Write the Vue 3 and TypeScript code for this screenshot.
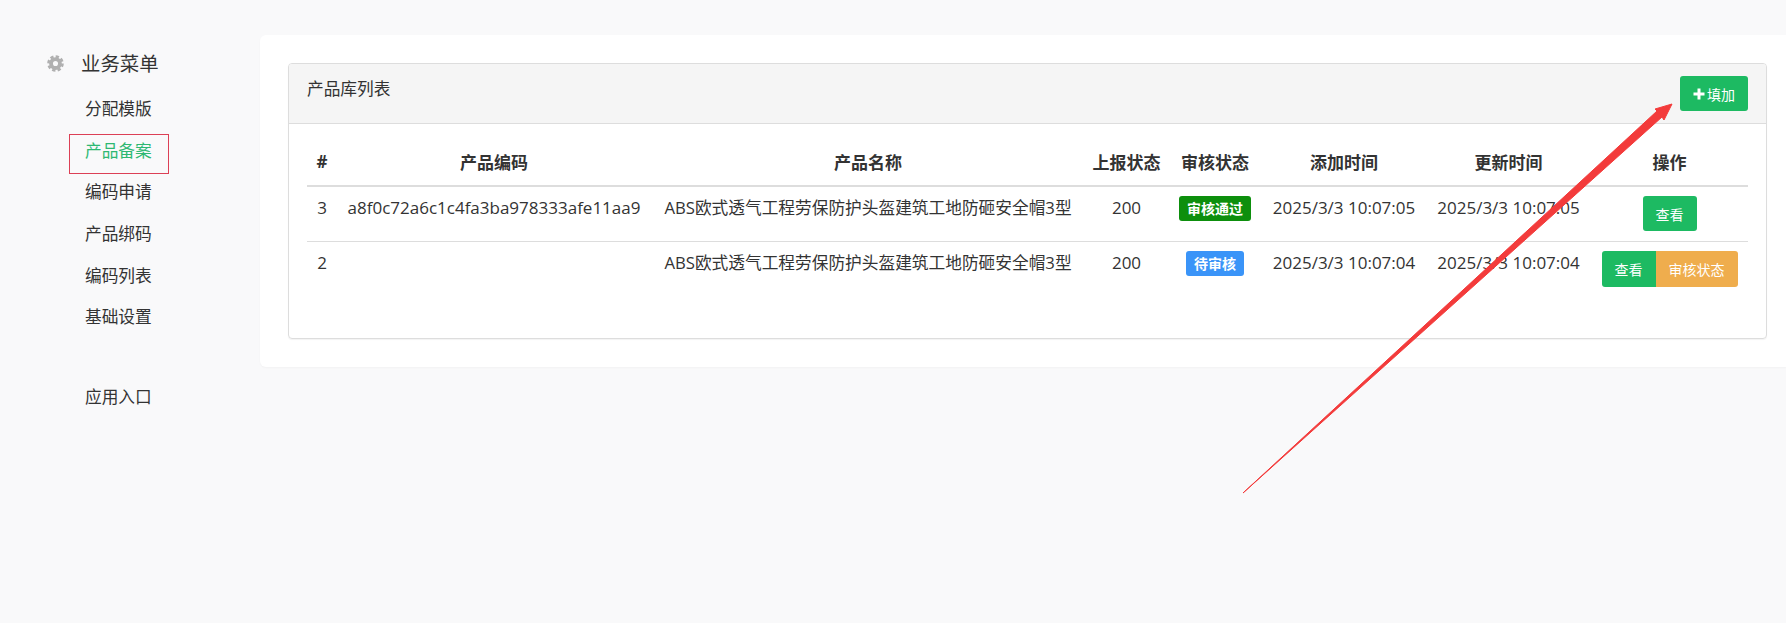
<script setup lang="ts">
interface Row {
  id: number
  code: string
  name: string
  report: number
  status: string
  statusClass: string
  added: string
  updated: string
  audit: boolean
}

const menu = [
  { label: '分配模版', active: false },
  { label: '产品备案', active: true },
  { label: '编码申请', active: false },
  { label: '产品绑码', active: false },
  { label: '编码列表', active: false },
  { label: '基础设置', active: false },
]

const name = 'ABS欧式透气工程劳保防护头盔建筑工地防砸安全帽3型'

const rows: Row[] = [
  { id: 3, code: 'a8f0c72a6c1c4fa3ba978333afe11aa9', name, report: 200, status: '审核通过', statusClass: 'passed', added: '2025/3/3 10:07:05', updated: '2025/3/3 10:07:05', audit: false },
  { id: 2, code: '', name, report: 200, status: '待审核', statusClass: 'pending', added: '2025/3/3 10:07:04', updated: '2025/3/3 10:07:04', audit: true },
]

const columns = ['#', '产品编码', '产品名称', '上报状态', '审核状态', '添加时间', '更新时间', '操作']
</script>

<template>
  <div class="page">
    <aside class="sidebar">
      <div class="menu-title">
        <svg class="gear" viewBox="0 0 16 16" width="17" height="17" aria-hidden="true">
          <circle cx="8" cy="8" r="4.2" fill="none" stroke="#b0b0b0" stroke-width="3.6" />
          <circle cx="8" cy="8" r="6.6" fill="none" stroke="#b0b0b0" stroke-width="2.4" stroke-dasharray="3.1 2.08" />
        </svg>
        <span>业务菜单</span>
      </div>
      <ul class="menu">
        <li v-for="item in menu" :key="item.label" :class="{ active: item.active }">{{ item.label }}</li>
      </ul>
      <div class="entry">应用入口</div>
    </aside>

    <main class="main">
      <section class="card">
        <div class="panel">
          <header class="panel-head">
            <span class="panel-title">产品库列表</span>
            <button class="btn add" type="button">
              <svg viewBox="0 0 12 12" width="12" height="12" aria-hidden="true">
                <path d="M4.5 0.5h3v4h4v3h-4v4h-3v-4h-4v-3h4z" fill="#fff" />
              </svg>
              填加
            </button>
          </header>
          <div class="panel-body">
            <table class="table">
              <thead>
                <tr>
                  <th v-for="col in columns" :key="col">{{ col }}</th>
                </tr>
              </thead>
              <tbody>
                <tr v-for="row in rows" :key="row.id">
                  <td>{{ row.id }}</td>
                  <td>{{ row.code }}</td>
                  <td class="name">{{ row.name }}</td>
                  <td>{{ row.report }}</td>
                  <td><span class="tag" :class="row.statusClass">{{ row.status }}</span></td>
                  <td>{{ row.added }}</td>
                  <td>{{ row.updated }}</td>
                  <td>
                    <div class="actions">
                      <button class="btn view" type="button">查看</button>
                      <button v-if="row.audit" class="btn audit" type="button">审核状态</button>
                    </div>
                  </td>
                </tr>
              </tbody>
            </table>
          </div>
        </div>
      </section>
    </main>

    <svg class="arrow" width="1786" height="623" viewBox="0 0 1786 623" aria-hidden="true">
      <polygon points="1672,104 1655,109 1657,111 1243,493 1662,117 1664,120" fill="#f33b3b" stroke="#f33b3b" stroke-width="1" stroke-linejoin="round" />
    </svg>
  </div>
</template>

<style>
html,
body {
  margin: 0;
  background: #f9f9fa;
}
</style>

<style scoped>
.page {
  position: relative;
  display: flex;
  width: 1786px;
  height: 623px;
  overflow: hidden;
  background: #f9f9fa;
  color: #333;
  font-family: "Open Sans", "Noto Sans CJK SC", sans-serif;
  font-size: 16px;
}

.sidebar {
  flex: 0 0 260px;
  box-sizing: border-box;
  padding-top: 41px;
}

.menu-title {
  display: flex;
  align-items: center;
  height: 42px;
  padding-left: 47px;
  font-size: 19.4px;
}

.gear {
  margin-right: 17px;
  transform: translateY(1px);
}

.menu {
  margin: 5px 0 0;
  padding: 0;
  list-style: none;
}

.menu li,
.entry {
  height: 41.7px;
  line-height: 41.7px;
  padding-left: 85px;
  font-size: 16.7px;
}

.menu li.active {
  position: relative;
  color: #2eb872;
}

.menu li.active::after {
  content: "";
  position: absolute;
  left: 69px;
  top: 4px;
  width: 98px;
  height: 38px;
  border: 1px solid #dc4055;
}

.entry {
  margin-top: 38px;
}

.main {
  flex: 1;
  min-width: 0;
  padding-top: 35px;
}

.card {
  box-sizing: border-box;
  height: 332px;
  padding: 28px 19px 0 28px;
  background: #fff;
  border-radius: 6px 0 0 6px;
  box-shadow: 0 1px 2px rgba(0, 0, 0, 0.03);
}

.panel {
  box-sizing: border-box;
  height: 276px;
  border: 1px solid #ddd;
  border-radius: 4px;
  box-shadow: 0 1px 1px rgba(0, 0, 0, 0.05);
}

.panel-head {
  display: flex;
  align-items: flex-start;
  justify-content: space-between;
  box-sizing: border-box;
  height: 60px;
  padding: 13px 18px 0 18px;
  background: #f5f5f5;
  border-bottom: 1px solid #ddd;
  border-radius: 3px 3px 0 0;
}

.panel-title {
  font-size: 16.7px;
  line-height: 24px;
}

.btn {
  display: inline-flex;
  align-items: center;
  justify-content: center;
  box-sizing: border-box;
  border: 0;
  border-radius: 3px;
  padding: 0;
  color: #fff;
  font-family: inherit;
  font-size: 14px;
}

.add {
  gap: 2px;
  width: 68px;
  height: 35px;
  margin-top: -1px;
  background: #1dba62;
}

.view {
  width: 54px;
  height: 35px;
  background: #1dba62;
}

.audit {
  width: 82px;
  height: 36px;
  background: #efad4d;
  border-radius: 0 3px 3px 0;
}

.panel-body {
  padding: 16px 18px 0 18px;
}

.table {
  width: 1441px;
  border-collapse: collapse;
  table-layout: fixed;
}

th {
  box-sizing: border-box;
  height: 46px;
  padding: 0 0 2px;
  border-bottom: 2px solid #ddd;
  font-size: 17px;
  font-weight: 700;
  text-align: center;
}

td {
  height: 55px;
  box-sizing: border-box;
  padding: 8px 0 0;
  vertical-align: top;
  text-align: center;
  font-size: 17px;
  line-height: 25px;
  white-space: nowrap;
}

td.name {
  font-size: 16.7px;
}

tbody tr:first-child td {
  border-bottom: 1px solid #ddd;
}

th:first-child,
td:first-child {
  padding-right: 2px;
}

th:last-child {
  padding-right: 2px;
}

th:nth-child(1) { width: 32px; }
th:nth-child(2) { width: 310px; }
th:nth-child(3) { width: 438px; }
th:nth-child(4) { width: 79px; }
th:nth-child(5) { width: 98px; }
th:nth-child(6) { width: 160px; }
th:nth-child(7) { width: 169px; }
th:nth-child(8) { width: 155px; }

.tag {
  display: inline-block;
  height: 25px;
  margin-top: 1px;
  padding: 0 8px;
  border-radius: 3px;
  color: #fff;
  font-size: 14px;
  font-weight: 700;
  line-height: 25px;
}

.passed {
  background: #0d8f0d;
}

.pending {
  background: #3a94f8;
}

.actions {
  display: flex;
  justify-content: center;
  margin: 1px 2px 0 0;
}

.actions .view:not(:last-child) {
  height: 36px;
  border-radius: 3px 0 0 3px;
}

.arrow {
  position: absolute;
  left: 0;
  top: 0;
  pointer-events: none;
}
</style>
